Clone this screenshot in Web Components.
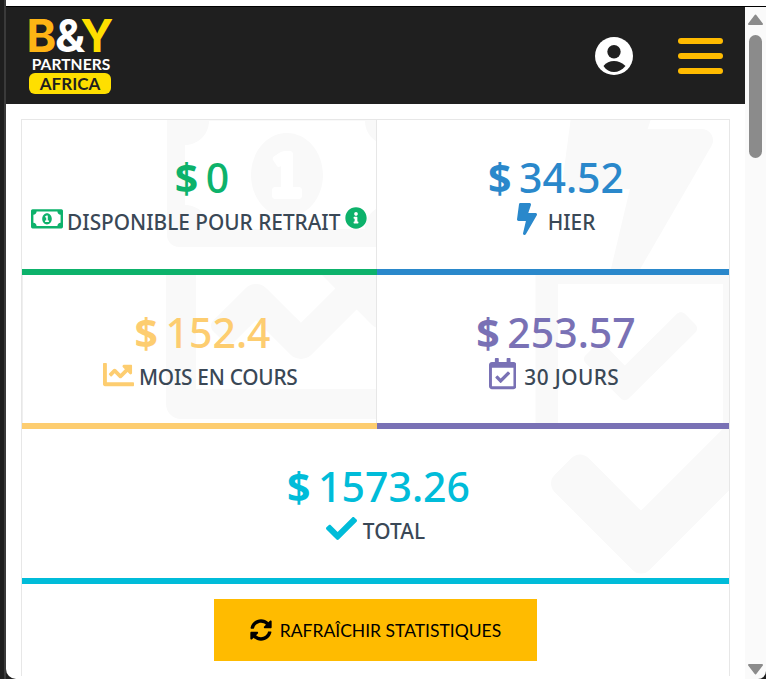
<!DOCTYPE html>
<html lang="fr"><head><meta charset="utf-8"><title>B&amp;Y Partners Africa</title>
<style>
html,body{margin:0;padding:0;background:#fff;overflow:hidden}
body{font-family:"Noto Sans","Open Sans",sans-serif}
</style></head><body>
<app-window>
  <app-header></app-header>
  <stat-board>
    <stat-cell color="#0db26b" value="$ 0" label="DISPONIBLE POUR RETRAIT" icon="bill" mark="bill" info></stat-cell>
    <stat-cell color="#2a88cb" value="$ 34.52" label="HIER" icon="bolt" mark="bolt"></stat-cell>
    <stat-cell color="#fdcd70" value="$ 152.4" label="MOIS EN COURS" icon="chart" mark="chart"></stat-cell>
    <stat-cell color="#7971b5" value="$ 253.57" label="30 JOURS" icon="cal" mark="cal"></stat-cell>
    <stat-cell wide color="#00bcd9" value="$ 1573.26" label="TOTAL" icon="check" mark="check"></stat-cell>
    <refresh-button slot="footer">RAFRAÎCHIR STATISTIQUES</refresh-button>
  </stat-board>
</app-window>
<script>
const ICONS={
bill:['0 0 640 512','M320 144c-53.02 0-96 50.14-96 112 0 61.85 42.98 112 96 112 53 0 96-50.13 96-112 0-61.86-42.98-112-96-112zm40 168c0 4.42-3.58 8-8 8h-64c-4.42 0-8-3.58-8-8v-16c0-4.42 3.58-8 8-8h16v-55.44l-.47.31a7.992 7.992 0 0 1-11.09-2.22l-8.88-13.31a7.992 7.992 0 0 1 2.22-11.09l15.33-10.22a23.99 23.99 0 0 1 13.31-4.03H328c4.42 0 8 3.58 8 8v88h16c4.42 0 8 3.58 8 8v16zM608 64H32C14.33 64 0 78.33 0 96v320c0 17.67 14.33 32 32 32h576c17.67 0 32-14.33 32-32V96c0-17.67-14.33-32-32-32zm-16 272c-35.35 0-64 28.65-64 64H112c0-35.35-28.65-64-64-64V176c35.35 0 64-28.65 64-64h416c0 35.35 28.65 64 64 64v160z'],
bolt:['0 0 320 512','M296 160H180.6l42.6-129.8C227.2 15 215.7 0 200 0H56C44 0 33.8 8.9 32.2 20.8l-32 240C-1.7 275.2 9.5 288 24 288h118.7L96.6 482.5c-3.6 15.2 8 29.5 23.3 29.5 8.4 0 16.4-4.4 20.8-12l176-304c9.3-15.9-2.2-36-20.7-36z'],
chart:['0 0 512 512','M496 384H64V80c0-8.84-7.16-16-16-16H16C7.16 64 0 71.16 0 80v336c0 17.67 14.33 32 32 32h464c8.84 0 16-7.16 16-16v-32c0-8.84-7.16-16-16-16zM464 96H345.94c-21.38 0-32.09 25.85-16.97 40.97l32.4 32.4L288 242.75l-73.37-73.37c-12.5-12.5-32.76-12.5-45.25 0l-68.69 68.69c-6.25 6.25-6.25 16.38 0 22.63l22.62 22.62c6.25 6.25 16.38 6.25 22.63 0L192 237.25l73.37 73.37c12.5 12.5 32.76 12.5 45.25 0l96-96 32.4 32.4c15.12 15.12 40.97 4.41 40.97-16.97V112c0-8.84-7.16-16-16-16z'],
cal:['0 0 448 512','M400 64h-48V12c0-6.627-5.373-12-12-12h-40c-6.627 0-12 5.373-12 12v52H160V12c0-6.627-5.373-12-12-12h-40c-6.627 0-12 5.373-12 12v52H48C21.49 64 0 85.49 0 112v352c0 26.51 21.49 48 48 48h352c26.51 0 48-21.49 48-48V112c0-26.51-21.49-48-48-48zm-6 400H54a6 6 0 0 1-6-6V160h352v298a6 6 0 0 1-6 6zm-52.849-200.65L198.842 404.519c-4.705 4.667-12.303 4.637-16.971-.068l-75.091-75.699c-4.667-4.705-4.637-12.303.068-16.971l22.719-22.536c4.705-4.667 12.303-4.637 16.97.069l44.104 44.461 111.072-110.181c4.705-4.667 12.303-4.637 16.971.068l22.536 22.718c4.667 4.705 4.636 12.303-.069 16.97z'],
check:['0 0 512 512','M173.898 439.404l-166.4-166.4c-9.997-9.997-9.997-26.206 0-36.204l36.203-36.204c9.997-9.998 26.207-9.998 36.204 0L192 312.69 432.095 72.596c9.997-9.997 26.207-9.997 36.204 0l36.203 36.204c9.997 9.997 9.997 26.206 0 36.204l-294.4 294.401c-9.998 9.997-26.207 9.997-36.204-.001z'],
sync:['0 0 512 512','M370.72 133.28C339.458 104.008 298.888 87.962 255.848 88c-77.458.068-144.328 53.178-162.791 126.85-1.344 5.363-6.122 9.15-11.651 9.15H24.103c-7.498 0-13.194-6.807-11.807-14.176C33.933 94.924 134.813 8 256 8c66.448 0 126.791 26.136 171.315 68.685L463.03 40.97C478.149 25.851 504 36.559 504 57.941V192c0 13.255-10.745 24-24 24H345.941c-21.382 0-32.09-25.851-16.971-40.971l41.75-41.749zM32 296h134.059c21.382 0 32.09 25.851 16.971 40.971l-41.75 41.75c31.262 29.273 71.835 45.319 114.876 45.28 77.418-.07 144.315-53.144 162.787-126.849 1.344-5.363 6.122-9.15 11.651-9.15h57.304c7.498 0 13.194 6.807 11.807 14.176C478.067 417.076 377.187 504 256 504c-66.448 0-126.791-26.136-171.315-68.685L48.97 471.03C33.851 486.149 8 475.441 8 454.059V320c0-13.255 10.745-24 24-24z'],
info:['0 0 512 512','M256 8C119.043 8 8 119.083 8 256c0 136.997 111.043 248 248 248s248-111.003 248-248C504 119.083 392.957 8 256 8zm0 110c23.196 0 42 18.804 42 42s-18.804 42-42 42-42-18.804-42-42 18.804-42 42-42zm56 254c0 6.627-5.373 12-12 12h-88c-6.627 0-12-5.373-12-12v-24c0-6.627 5.373-12 12-12h12v-64h-12c-6.627 0-12-5.373-12-12v-24c0-6.627 5.373-12 12-12h64c6.627 0 12 5.373 12 12v100h12c6.627 0 12 5.373 12 12v24z']
};
const svg=(n,w,h,extra='')=>`<svg ${extra} width="${w}" height="${h}" viewBox="${ICONS[n][0]}" fill="currentColor" aria-hidden="true"><path d="${ICONS[n][1]}"/></svg>`;
const MARK={bill:[145,-41,240,192],bolt:[186,-66,150,240],chart:[144,-66,240,240],cal:[158,-66,211,240],check:[529,-65,240,240]};
/* width, height, gap to label, extra left space, label letter spacing */
const LABEL={bill:[32,25.6,4.5,0,0],bolt:[20,32,11,6,0],chart:[31,31,5,1.5,-.25],cal:[27.4,31.3,8,2,.4],check:[31,31,6,0,.1]};

class AppWindow extends HTMLElement{constructor(){super();this.attachShadow({mode:'open'}).innerHTML=`<style>
:host{display:grid;grid-template-columns:6px 739px 21px;width:766px;height:679px;overflow:hidden;background:#1e1e1e}
.frame{border-right:2px solid #3a3a3a;box-sizing:border-box}
main{display:flex;flex-direction:column;min-width:0;height:679px;overflow:hidden;background:#fff;border-bottom-left-radius:10px}
.top{height:6px;flex:none;background:#fff;border-bottom:1px solid #000}
.bar{background:#fafafa;display:flex;flex-direction:column;align-items:center;border-bottom-right-radius:8px;overflow:hidden}
.cap{height:6px;width:100%;background:#fff;flex:none;border-bottom:1px solid #000}
.bar svg{display:block;flex:none;fill:#8b8b8b;stroke:#8b8b8b;stroke-width:2;stroke-linejoin:round}
.up{margin-top:7px}
.thumb{margin-top:10px;width:13px;height:123px;border-radius:7px;background:#8b8b8b;flex:none}
.down{margin-top:auto;margin-bottom:4px}
</style><div class="frame"></div><main><div class="top"></div><slot></slot></main>
<div class="bar"><div class="cap"></div>
<svg class="up" width="15" height="11" viewBox="0 0 15 11"><path d="M7.500 1.500L14 10H1z"/></svg>
<div class="thumb"></div>
<svg class="down" width="15" height="11" viewBox="0 0 15 11"><path d="M7.500 9.500L14 1H1z"/></svg></div>`}}
customElements.define('app-window',AppWindow);

class AppHeader extends HTMLElement{constructor(){super();this.attachShadow({mode:'open'}).innerHTML=`<style>
:host{display:flex;align-items:center;height:97px;flex:none;background:#1f1f1f;padding:0 22px 0 23px;box-sizing:border-box}
.logo{display:flex;flex-direction:column;align-items:center;width:82px;margin-top:1px}
.by{display:block;overflow:visible;font:700 45px "Inter","Liberation Sans",sans-serif}
.p{font:700 15.5px/17px "Lato","Liberation Sans",sans-serif;color:#fff;margin-top:4px;letter-spacing:.1px;padding-left:2px}
.af{font:700 17px/21px "Lato","Liberation Sans",sans-serif;color:#1f1f1f;background:#ffdf00;border-radius:6px;width:82px;height:21px;text-align:center}
.user{margin-left:auto;margin-right:45.5px;display:block}
.menu{display:flex;flex-direction:column;gap:9px;width:45px}
.menu i{display:block;height:6px;border-radius:3px;background:#ffbb00}
</style>
<div class="logo"><svg class="by" width="82" height="33" viewBox="0 0 82 33"><text x="-2.500" y="33" fill="#feb414">B</text><text x="26" y="33" fill="#fff">&amp;</text><text x="51.500" y="33" fill="#ffdf00">Y</text></svg><div class="p">PARTNERS</div><div class="af">AFRICA</div></div>
<svg class="user" width="38" height="38" viewBox="0 0 38 38"><circle cx="19" cy="19" r="19" fill="#fff"/><circle cx="19" cy="14.700" r="6.700" fill="#1f1f1f"/><path d="M8.500 29C11 25.500 15 24 19 24s8 1.500 11.500 5C27 33 23 35 19 35s-8-2-10.500-6z" fill="#1f1f1f"/></svg>
<div class="menu"><i></i><i></i><i></i></div>`}}
customElements.define('app-header',AppHeader);

class StatBoard extends HTMLElement{constructor(){super();this.attachShadow({mode:'open'}).innerHTML=`<style>
:host{display:block;margin:15px 15px 3px 15px;border:1px solid #e7e7e7;border-bottom:0;flex:1;box-sizing:border-box}
.g{display:grid;grid-template-columns:355px 352px;grid-template-rows:155px 154px 155px}
.f{display:flex;justify-content:center;padding-top:15px}
</style><div class="g"><slot></slot></div><div class="f"><slot name="footer"></slot></div>`}}
customElements.define('stat-board',StatBoard);

class StatCell extends HTMLElement{
connectedCallback(){ if(this.shadowRoot)return;
 const c=this.getAttribute('color'),ic=this.getAttribute('icon'),mk=this.getAttribute('mark');
 const [mx,my,mw,mh]=MARK[mk],[iw,ih,gap,ml,ls]=LABEL[ic];
 const val=this.getAttribute('value').replace('$','<b>$</b>');
 const s=this.attachShadow({mode:'open'});
 s.innerHTML=`<style>
:host{display:flex;flex-direction:column;position:relative;overflow:hidden;box-sizing:border-box;${this.hasAttribute('wide')?'grid-column:1/3;':''}}
.mark{position:absolute;left:${mx}px;top:${my}px;color:#f9f9f9}
.c{position:relative;flex:1;display:flex;flex-direction:column;align-items:center;padding-top:32px;box-sizing:border-box;${mk==='bill'||mk==='chart'?'border-right:1px solid #e7e7e7;':''}${mk==='chart'?'border-left:1px solid #efefef;':''}}
.v{font-size:41px;line-height:50px;font-weight:500;color:${c};white-space:pre;padding-left:6px;word-spacing:-3px}
.v b{font-weight:700}
.l{display:flex;align-items:center;height:28px;font-size:20.800px;line-height:28px;font-weight:500;color:#3a4856;margin-top:6px;white-space:nowrap;letter-spacing:${ls}px}
.l svg{color:${c};display:block;flex:none;margin:0 ${gap}px 6px ${ml}px}
.l svg.info{margin:0 0 8px 5px}
.b6{position:relative;height:6px;flex:none;background:${c}}
</style>${svg(mk,mw,mh,'class="mark"')}
<div class="c"><div class="v">${val}</div>
<div class="l">${svg(ic,iw,ih)}<span>${this.getAttribute('label')}</span>${this.hasAttribute('info')?svg('info',22,22,'class="info"'):''}</div></div><div class="b6"></div>`;
}}
customElements.define('stat-cell',StatCell);

class RefreshButton extends HTMLElement{constructor(){super();this.attachShadow({mode:'open'}).innerHTML=`<style>
:host{display:flex;align-items:center;justify-content:center;gap:8px;width:323px;height:62px;background:#ffbb00;color:#000;font:400 17.500px "Lato",sans-serif}
svg{display:block}
</style>${svg('sync',22,22)}<slot></slot>`}}
customElements.define('refresh-button',RefreshButton);
</script></body></html>
